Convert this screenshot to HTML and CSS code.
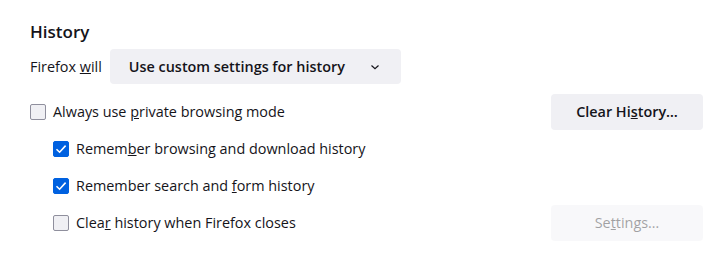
FILE: index.html
```html
<!DOCTYPE html>
<html>
<head>
<meta charset="utf-8">
<link rel="stylesheet" href="styles.css">
</head>
<body>
<div class="pane">
  <h1 class="title">History</h1>
  <div class="mode-row">
    <span class="label">Firefox <u>w</u>ill</span>
    <div class="select">
      <span>Use custom settings for history</span>
      <svg class="chev" width="12" height="12" viewBox="0 0 12 12"><path d="M2.5 4.5 L6 7.8 L9.5 4.5" fill="none" stroke="#15141a" stroke-width="1.2"/></svg>
    </div>
  </div>
  <div class="row">
    <label class="check"><span class="box"></span><span>Always use <u>p</u>rivate browsing mode</span></label>
    <button class="btn">Clear Hi<u>s</u>tory…</button>
  </div>
  <div class="row indent">
    <label class="check"><span class="box on"><svg width="16" height="16" viewBox="0 0 16 16"><path d="M3.5 8.2 L6.6 11.2 L12.6 4.6" fill="none" stroke="#fff" stroke-width="1.6"/></svg></span><span>Remem<u>b</u>er browsing and download history</span></label>
  </div>
  <div class="row indent">
    <label class="check"><span class="box on"><svg width="16" height="16" viewBox="0 0 16 16"><path d="M3.5 8.2 L6.6 11.2 L12.6 4.6" fill="none" stroke="#fff" stroke-width="1.6"/></svg></span><span>Remember search and <u>f</u>orm history</span></label>
  </div>
  <div class="row indent">
    <label class="check"><span class="box"></span><span>Clea<u>r</u> history when Firefox closes</span></label>
    <button class="btn disabled">Se<u>t</u>tings…</button>
  </div>
</div>
</body>
</html>
```
FILE: styles.css
```css
html, body {
  margin: 0;
  padding: 0;
  background: #fff;
}
body {
  font-family: "Open Sans", "Noto Sans", sans-serif;
  font-size: 14.4px;
  color: #15141a;
}
.pane {
  padding: 20px 25px 0 30px;
}
.title {
  margin: 0;
  font-size: 17px;
  font-weight: 600;
  line-height: 24px;
}
.mode-row {
  display: flex;
  align-items: center;
  gap: 8px;
  margin-top: 5px;
  height: 35px;
}
.select {
  width: 291px;
  height: 35px;
  box-sizing: border-box;
  background: #f0f0f4;
  border-radius: 4px;
  display: flex;
  align-items: center;
  justify-content: space-between;
  padding: 0 20px 0 19px;
  font-weight: 600;
}
.chev {
  display: block;
}
.mode-row + .row {
  margin-top: 9px;
}
.row {
  display: flex;
  align-items: center;
  justify-content: space-between;
  height: 37px;
}
.indent {
  padding-left: 23px;
}
.check {
  display: flex;
  align-items: center;
  gap: 7px;
}
.box {
  width: 16px;
  height: 16px;
  box-sizing: border-box;
  border: 1px solid #8f8f9d;
  border-radius: 2px;
  background: #f0f0f4;
  display: block;
}
.box.on {
  background: #0061e0;
  border-color: #0061e0;
}
.box svg {
  display: block;
  margin: -1px;
}
.btn {
  width: 152px;
  height: 36px;
  border: none;
  border-radius: 4px;
  background: #f0f0f4;
  color: #15141a;
  font-family: inherit;
  font-size: 14.4px;
  font-weight: 600;
  padding: 0;
}
.btn.disabled {
  opacity: 0.4;
  font-weight: 400;
}
```
